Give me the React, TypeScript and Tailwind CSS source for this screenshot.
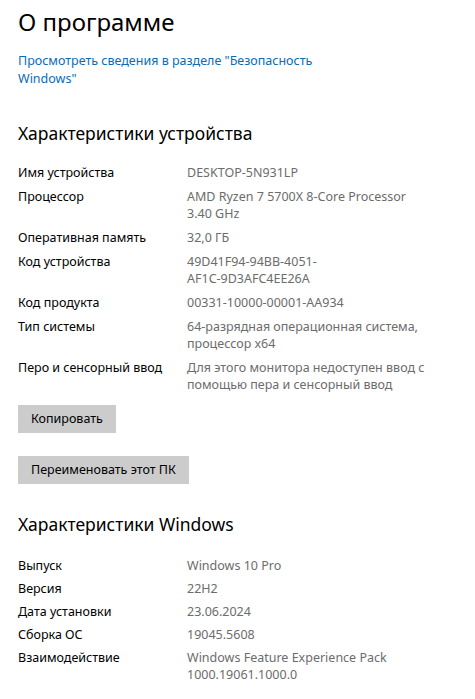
import React from 'react';

type Row = { label: string; value: string[] };

const deviceRows: Row[] = [
  { label: 'Имя устройства', value: ['DESKTOP-5N931LP'] },
  { label: 'Процессор', value: ['AMD Ryzen 7 5700X 8-Core Processor', '3.40 GHz'] },
  { label: 'Оперативная память', value: ['32,0 ГБ'] },
  { label: 'Код устройства', value: ['49D41F94-94BB-4051-', 'AF1C-9D3AFC4EE26A'] },
  { label: 'Код продукта', value: ['00331-10000-00001-AA934'] },
  { label: 'Тип системы', value: ['64-разрядная операционная система,', 'процессор x64'] },
  { label: 'Перо и сенсорный ввод', value: ['Для этого монитора недоступен ввод с', 'помощью пера и сенсорный ввод'] },
];

const windowsRows: Row[] = [
  { label: 'Выпуск', value: ['Windows 10 Pro'] },
  { label: 'Версия', value: ['22H2'] },
  { label: 'Дата установки', value: ['23.06.2024'] },
  { label: 'Сборка ОС', value: ['19045.5608'] },
  { label: 'Взаимодействие', value: ['Windows Feature Experience Pack', '1000.19061.1000.0'] },
];

function SpecList({ rows, gap }: { rows: Row[]; gap: string }) {
  return (
    <div className={`grid grid-cols-[169px_1fr] text-[12.5px] leading-[17px] ${gap}`}>
      {rows.map((row) => (
        <React.Fragment key={row.label}>
          <div className="text-black">{row.label}</div>
          <div className="text-[#6c6c6c]">
            {row.value.map((line) => (
              <div key={line} className="whitespace-nowrap">{line}</div>
            ))}
          </div>
        </React.Fragment>
      ))}
    </div>
  );
}

export default function App() {
  return (
    <div className="w-[475px] h-[699px] overflow-hidden bg-white pl-[18px] font-['Noto_Sans',sans-serif]">
      <h1 className="pt-[6px] text-[24px] leading-[32px] text-black">О программе</h1>
      <a className="mt-[14px] block text-[12.5px] leading-[18px] text-[#0a6cb8]" href="#">
        Просмотреть сведения в разделе "Безопасность
        <br />
        Windows"
      </a>

      <h2 className="mt-[33px] text-[17.5px] leading-[24px] text-black">Характеристики устройства</h2>
      <div className="mt-[19px]">
        <SpecList rows={deviceRows} gap="gap-y-[7px]" />
      </div>

      <button className="mt-[12px] block h-[28px] bg-[#cccccc] px-[13px] text-[12.5px] text-black">
        Копировать
      </button>
      <button className="mt-[23px] block h-[28px] bg-[#cccccc] px-[13px] text-[12.5px] text-black">
        Переименовать этот ПК
      </button>

      <h2 className="mt-[28px] text-[17.5px] leading-[24px] text-black">Характеристики Windows</h2>
      <div className="mt-[21px]">
        <SpecList rows={windowsRows} gap="gap-y-[6px]" />
      </div>
    </div>
  );
}
